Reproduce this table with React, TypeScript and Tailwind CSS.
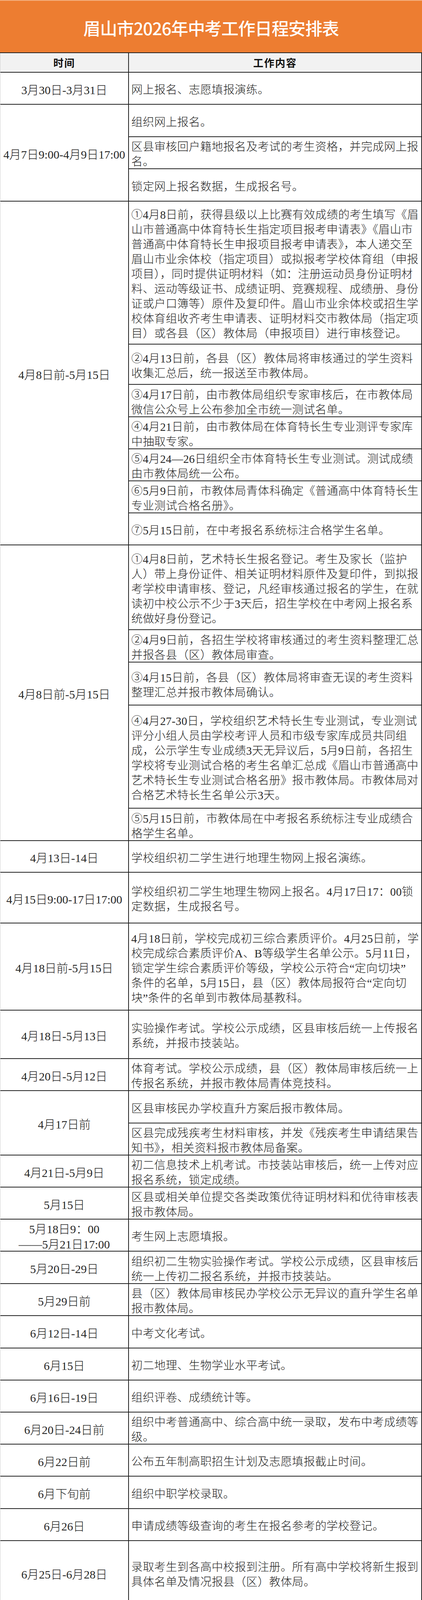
import React from 'react';

type Sub = { h: string; lines: string[] };
type Row = { date: string[]; subs: Sub[] };

const rows: Row[] = [
    { date: ['3月30日-3月31日'], subs: [{ h: 'h-[82px]', lines: ['网上报名、志愿填报演练。'] }] },
    {
        date: ['4月7日9:00-4月9日17:00'],
        subs: [
            { h: 'h-[83px]', lines: ['组织网上报名。'] },
            { h: 'h-[82px]', lines: ['区县审核回户籍地报名及考试的考生资格，并完成网上报', '名。'] },
            { h: 'h-[83px]', lines: ['锁定网上报名数据，生成报名号。'] },
        ],
    },
    {
        date: ['4月8日前-5月15日'],
        subs: [
            {
                h: 'h-[366px]',
                lines: [
                    '①4月8日前，获得县级以上比赛有效成绩的考生填写《眉',
                    '山市普通高中体育特长生指定项目报考申请表》《眉山市',
                    '普通高中体育特长生申报项目报考申请表》，本人递交至',
                    '眉山市业余体校（指定项目）或拟报考学校体育组（申报',
                    '项目），同时提供证明材料（如：注册运动员身份证明材',
                    '料、运动等级证书、成绩证明、竞赛规程、成绩册、身份',
                    '证或户口簿等）原件及复印件。眉山市业余体校或招生学',
                    '校体育组收齐考生申请表、证明材料交市教体局（指定项',
                    '目）或各县（区）教体局（申报项目）进行审核登记。',
                ],
            },
            { h: 'h-[103px]', lines: ['②4月13日前，各县（区）教体局将审核通过的学生资料', '收集汇总后，统一报送至市教体局。'] },
            { h: 'h-[83px]', lines: ['③4月17日前，由市教体局组织专家审核后，在市教体局', '微信公众号上公布参加全市统一测试名单。'] },
            { h: 'h-[82px]', lines: ['④4月21日前，由市教体局在体育特长生专业测评专家库', '中抽取专家。'] },
            { h: 'h-[82px]', lines: ['⑤4月24—26日组织全市体育特长生专业测试。测试成绩', '由市教体局统一公布。'] },
            { h: 'h-[82px]', lines: ['⑥5月9日前，市教体局青体科确定《普通高中体育特长生', '专业测试合格名册》。'] },
            { h: 'h-[82px]', lines: ['⑦5月15日前，在中考报名系统标注合格学生名单。'] },
        ],
    },
    {
        date: ['4月8日前-5月15日'],
        subs: [
            {
                h: 'h-[217px]',
                lines: [
                    '①4月8日前，艺术特长生报名登记。考生及家长（监护',
                    '人）带上身份证件、相关证明材料原件及复印件，到拟报',
                    '考学校申请审核、登记，凡经审核通过报名的学生，在就',
                    '读初中校公示不少于3天后，招生学校在中考网上报名系',
                    '统做好身份登记。',
                ],
            },
            { h: 'h-[83px]', lines: ['②4月9日前，各招生学校将审核通过的考生资料整理汇总', '并报各县（区）教体局审查。'] },
            { h: 'h-[110px]', lines: ['③4月15日前，各县（区）教体局将审查无误的考生资料', '整理汇总并报市教体局确认。'] },
            {
                h: 'h-[264px]',
                lines: [
                    '④4月27-30日，学校组织艺术特长生专业测试，专业测试',
                    '评分小组人员由学校考评人员和市级专家库成员共同组',
                    '成，公示学生专业成绩3天无异议后，5月9日前，各招生',
                    '学校将专业测试合格的考生名单汇总成《眉山市普通高中',
                    '艺术特长生专业测试合格名册》报市教体局。市教体局对',
                    '合格艺术特长生名单公示3天。',
                ],
            },
            { h: 'h-[83px]', lines: ['⑤5月15日前，市教体局在中考报名系统标注专业成绩合', '格学生名单。'] },
        ],
    },
    { date: ['4月13日-14日'], subs: [{ h: 'h-[81px]', lines: ['学校组织初二学生进行地理生物网上报名演练。'] }] },
    {
        date: ['4月15日9:00-17日17:00'],
        subs: [{ h: 'h-[130px]', lines: ['学校组织初二学生地理生物网上报名。4月17日17：00锁', '定数据，生成报名号。'] }],
    },
    {
        date: ['4月18日前-5月15日'],
        subs: [
            {
                h: 'h-[223px]',
                lines: [
                    '4月18日前，学校完成初三综合素质评价。4月25日前，学',
                    '校完成综合素质评价A、B等级学生名单公示。5月11日，',
                    '锁定学生综合素质评价等级，学校公示符合“定向切块”',
                    '条件的名单，5月15日，县（区）教体局报符合“定向切',
                    '块”条件的名单到市教体局基教科。',
                ],
            },
        ],
    },
    {
        date: ['4月18日-5月13日'],
        subs: [{ h: 'h-[124px]', lines: ['实验操作考试。学校公示成绩，区县审核后统一上传报名', '系统，并报市技装站。'] }],
    },
    {
        date: ['4月20日-5月12日'],
        subs: [{ h: 'h-[82px]', lines: ['体育考试。学校公示成绩，县（区）教体局审核后统一上', '传报名系统，并报市教体局青体竞技科。'] }],
    },
    {
        date: ['4月17日前'],
        subs: [
            { h: 'h-[83px]', lines: ['区县审核民办学校直升方案后报市教体局。'] },
            { h: 'h-[82px]', lines: ['区县完成残疾考生材料审核，并发《残疾考生申请结果告', '知书》，相关资料报市教体局备案。'] },
        ],
    },
    {
        date: ['4月21日-5月9日'],
        subs: [{ h: 'h-[82px]', lines: ['初二信息技术上机考试。市技装站审核后，统一上传对应', '报名系统，锁定成绩。'] }],
    },
    {
        date: ['5月15日'],
        subs: [{ h: 'h-[82px]', lines: ['区县或相关单位提交各类政策优待证明材料和优待审核表', '报市教体局。'] }],
    },
    { date: ['5月18日9：00', '——5月21日17:00'], subs: [{ h: 'h-[82px]', lines: ['考生网上志愿填报。'] }] },
    {
        date: ['5月20日-29日'],
        subs: [{ h: 'h-[83px]', lines: ['组织初二生物实验操作考试。学校公示成绩，区县审核后', '统一上传初二报名系统，并报市技装站。'] }],
    },
    {
        date: ['5月29日前'],
        subs: [{ h: 'h-[82px]', lines: ['县（区）教体局审核民办学校公示无异议的直升学生名单', '报市教体局。'] }],
    },
    { date: ['6月12日-14日'], subs: [{ h: 'h-[83px]', lines: ['中考文化考试。'] }] },
    { date: ['6月15日'], subs: [{ h: 'h-[82px]', lines: ['初二地理、生物学业水平考试。'] }] },
    { date: ['6月16日-19日'], subs: [{ h: 'h-[82px]', lines: ['组织评卷、成绩统计等。'] }] },
    {
        date: ['6月20日-24日前'],
        subs: [{ h: 'h-[82px]', lines: ['组织中考普通高中、综合高中统一录取，发布中考成绩等', '级。'] }],
    },
    { date: ['6月22日前'], subs: [{ h: 'h-[82px]', lines: ['公布五年制高职招生计划及志愿填报截止时间。'] }] },
    { date: ['6月下旬前'], subs: [{ h: 'h-[83px]', lines: ['组织中职学校录取。'] }] },
    { date: ['6月26日'], subs: [{ h: 'h-[82px]', lines: ['申请成绩等级查询的考生在报名参考的学校登记。'] }] },
    {
        date: ['6月25日-6月28日'],
        subs: [{ h: 'h-[165px]', lines: ['录取考生到各高中校报到注册。所有高中学校将新生报到', '具体名单及情况报县（区）教体局。'] }],
    },
    { date: ['6月29日'], subs: [{ h: 'h-[82px]', lines: ['县（区）教体局汇总成绩等级查询考生名单报市教体局。'] }] },
    { date: ['6月29日-7月2日'], subs: [{ h: 'h-[81px]', lines: ['市、县（区）、校逐级返回成绩等级查询结果。'] }] },
    {
        date: ['6月30日前'],
        subs: [{ h: 'h-[83px]', lines: ['区县将辖区内所有高中新生报到情况及未到校注册学生名', '单统计表汇总上报到市教体局。'] }],
    },
    { date: ['6月30日前'], subs: [{ h: 'h-[82px]', lines: ['考生网上填报五年制高职志愿。'] }] },
    {
        date: ['7月6日前'],
        subs: [
            {
                h: 'h-[147px]',
                lines: [
                    '7月3日学校自主招生录取结束后，将名单报区县教体局初',
                    '审，7月6日区县将初审通过的拟录自主招生名单及中考成',
                    '绩信息、学生身份信息等佐证材料报市教体局审核。',
                ],
            },
        ],
    },
    { date: ['7月17日前'], subs: [{ h: 'h-[82px]', lines: ['市教体局审定各学校自主招生学生信息，锁定招生名单。'] }] },
    { date: ['8月上旬'], subs: [{ h: 'h-[82px]', lines: ['五年制高职招生未完成计划征集志愿。'] }] },
    {
        date: ['8月20日前'],
        subs: [{ h: 'h-[83px]', lines: ['县（区）教体局审核《未升学学生名单统计表》报市教体', '局。'] }],
    },
];

const ScheduleRow: React.FC<{ row: Row }> = ({ row }) => {
    return (
        <div className="flex">
            <div className="w-[329px] shrink-0 min-h-0 border-r-2 border-b-2 border-[#222] flex items-center justify-center text-[30px] leading-[39px] text-center">
                <div className="translate-y-[4px]">
                    {row.date.map((d, i) => (
                        <div key={i} className="whitespace-nowrap">
                            {d}
                        </div>
                    ))}
                </div>
            </div>
            <div className="flex-1 flex flex-col">
                {row.subs.map((sub, i) => (
                    <div
                        key={i}
                        className={`${sub.h} min-h-0 shrink-0 border-b-2 border-[#222] flex items-center pl-[6px] text-[29px] leading-[38px] tracking-[0.4px]`}
                    >
                        <div className="translate-y-[4px]">
                            {sub.lines.map((line, j) => (
                                <div key={j} className="whitespace-nowrap">
                                    {line}
                                </div>
                            ))}
                        </div>
                    </div>
                ))}
            </div>
        </div>
    );
};

export default function App() {
    return (
        <div
            lang="zh-CN"
            className="w-[1080px] bg-white text-[#262626] font-light font-['Liberation_Serif','Noto_Sans_CJK_SC',serif]"
        >
            <div className="h-[136px] bg-[#ed7d31] border-t-2 border-[#f4b183] border-b-2 border-b-[#222] flex items-center justify-center">
                <h1 className="translate-y-[3px] text-white text-[44px] leading-[60px] font-medium tracking-tight font-['Noto_Sans_CJK_SC',sans-serif]">
                    眉山市2026年中考工作日程安排表
                </h1>
            </div>
            <div className="border-l border-[#cfcfcf] border-r-2 border-r-[#222]">
                <div className="flex h-[50px] bg-[#f2f2f2] border-b-2 border-[#222] font-['Noto_Sans_CJK_SC',sans-serif] font-bold text-[26px] leading-[36px] tracking-[2px] text-[#111]">
                    <div className="w-[329px] shrink-0 border-r-2 border-[#222] flex items-center justify-center">
                        时间
                    </div>
                    <div className="flex-1 flex items-center justify-center">工作内容</div>
                </div>
                {rows.map((row, i) => (
                    <ScheduleRow key={i} row={row} />
                ))}
                <div className="h-[78px] border-b-2 border-[#222] flex items-center pl-[6px] text-[29px] leading-[38px] tracking-[0.4px] text-[#4472c4]">
                    <span className="translate-y-[2px]">注：此表日程安排如有变化，另行通知。</span>
                </div>
            </div>
        </div>
    );
}
